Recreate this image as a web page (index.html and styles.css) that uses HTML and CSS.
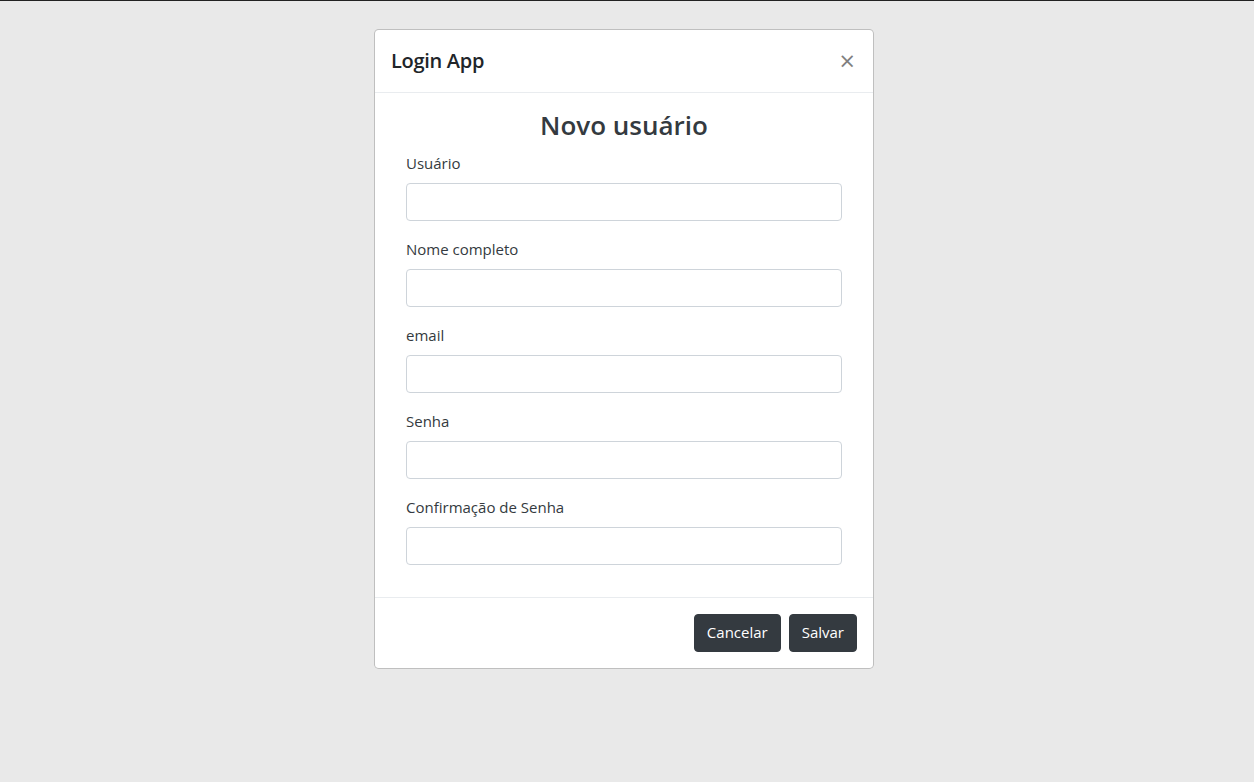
FILE: index.html
```html
<!DOCTYPE html>
<html lang="pt-BR">
<head>
<meta charset="utf-8">
<title>Login App</title>
<link rel="stylesheet" href="styles.css">
</head>
<body>
<div class="stage">
  <div class="modal">
    <div class="modal-header">
      <h5 class="modal-title">Login App</h5>
      <button class="close" type="button" aria-label="Close">&times;</button>
    </div>
    <div class="modal-body">
      <div class="container">
        <h3 class="heading">Novo usuário</h3>
        <div class="form-group">
          <label class="label">Usuário</label>
          <input class="input" type="text">
        </div>
        <div class="form-group">
          <label class="label">Nome completo</label>
          <input class="input" type="text">
        </div>
        <div class="form-group">
          <label class="label">email</label>
          <input class="input" type="text">
        </div>
        <div class="form-group">
          <label class="label">Senha</label>
          <input class="input" type="password">
        </div>
        <div class="form-group">
          <label class="label">Confirmação de Senha</label>
          <input class="input" type="password">
        </div>
      </div>
    </div>
    <div class="modal-footer">
      <button class="btn" type="button">Cancelar</button>
      <button class="btn" type="button">Salvar</button>
    </div>
  </div>
</div>
</body>
</html>
```
FILE: styles.css
```css
* { box-sizing: border-box; }
html, body { margin: 0; padding: 0; }
body {
  background: #e9e9e9;
  border-top: 1px solid #222;
  font-family: "Open Sans", "Noto Sans", sans-serif;
  font-size: 16px;
  line-height: 1.5;
  color: #212529;
  min-height: 100vh;
}
.stage {
  display: flex;
  justify-content: center;
  padding-top: 28px;
  padding-right: 6px;
}
.modal {
  width: 500px;
  background: #fff;
  border: 1px solid rgba(0,0,0,.25);
  border-radius: 4.8px;
  display: flex;
  flex-direction: column;
}
.modal-header {
  display: flex;
  align-items: flex-start;
  justify-content: space-between;
  height: 63px;
  padding: 16px;
  border-bottom: 1px solid #e9ecef;
}
.modal-title {
  margin: 0;
  font-size: 20px;
  font-weight: 600;
  line-height: 30px;
  letter-spacing: -0.3px;
  color: #212529;
}
.close {
  background: none;
  border: 0;
  padding: 0 2px 0 0;
  margin: 1px 0 0 0;
  font-family: "Open Sans", sans-serif;
  font-size: 27px;
  font-weight: 400;
  line-height: 1;
  color: #000;
  opacity: .5;
  cursor: pointer;
}
.modal-body { padding: 16px; }
.container { padding: 0 15px; }
.heading {
  margin: 0 0 8px;
  font-size: 26px;
  font-weight: 600;
  line-height: 33.6px;
  text-align: center;
  color: #343a40;
}
.form-group { margin-bottom: 16px; }
.label {
  display: block;
  margin-bottom: 8px;
  font-size: 15px;
  line-height: 24px;
  color: #343a40;
}
.input {
  display: block;
  width: 100%;
  height: 38px;
  padding: 6px 12px;
  border: 1px solid #ced4da;
  border-radius: 4px;
  background: #fff;
  font: inherit;
}
.modal-footer {
  display: flex;
  justify-content: flex-end;
  align-items: center;
  gap: 8px;
  padding: 16px;
  border-top: 1px solid #e9ecef;
}
.btn {
  height: 38px;
  padding: 6px 12px;
  border: 1px solid #343a40;
  border-radius: 4px;
  background: #343a40;
  color: #fff;
  font-family: inherit;
  font-size: 15px;
  line-height: 1.5;
  cursor: pointer;
}
```
